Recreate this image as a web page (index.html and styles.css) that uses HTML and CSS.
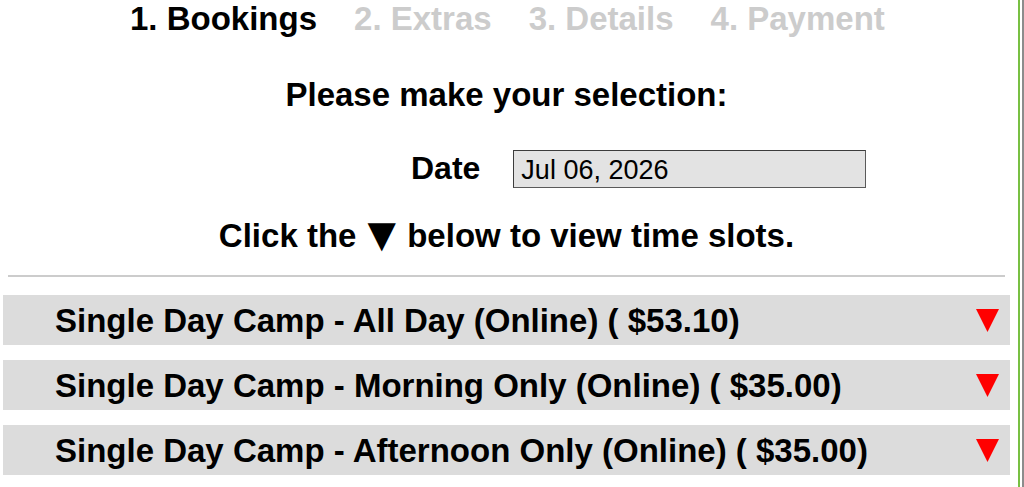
FILE: index.html
```html
<!DOCTYPE html>
<html lang="en">
<head>
<meta charset="utf-8">
<title>Bookings</title>
<link rel="stylesheet" href="styles.css">
</head>
<body>
<div class="outer">
  <div class="frame">
    <div class="content">
      <nav class="steps">
        <span class="step active">1. Bookings</span>
        <span class="step">2. Extras</span>
        <span class="step">3. Details</span>
        <span class="step">4. Payment</span>
      </nav>
      <h2 class="prompt">Please make your selection:</h2>
      <div class="date-row">
        <label class="date-label" for="date">Date</label>
        <input class="date-input" id="date" type="text" value="Jul 06, 2026" readonly>
      </div>
      <p class="hint">Click the <span class="tri">▼</span> below to view time slots.</p>
      <hr class="divider">
      <div class="rows">
        <div class="row"><span class="row-title">Single Day Camp - All Day (Online) ( $53.10)</span><svg class="arrow" viewBox="0 0 23 23"><polygon points="0,0 23,0 11.5,23" fill="#ff0000"/></svg></div>
        <div class="row"><span class="row-title">Single Day Camp - Morning Only (Online) ( $35.00)</span><svg class="arrow" viewBox="0 0 23 23"><polygon points="0,0 23,0 11.5,23" fill="#ff0000"/></svg></div>
        <div class="row"><span class="row-title">Single Day Camp - Afternoon Only (Online) ( $35.00)</span><svg class="arrow" viewBox="0 0 23 23"><polygon points="0,0 23,0 11.5,23" fill="#ff0000"/></svg></div>
      </div>
    </div>
  </div>
</div>
</body>
</html>
```

FILE: styles.css
```css
html, body {
  margin: 0;
  padding: 0;
  background: #ffffff;
}
body {
  font-family: "Liberation Sans", Arial, sans-serif;
  color: #000;
  overflow: hidden;
}
.outer {
  width: 1022px;
  height: 487px;
  border-right: 2px solid #8c8c8c;
}
.frame {
  width: 1020px;
  height: 487px;
  border-right: 2px solid #78c043;
  box-sizing: border-box;
}
.content {
  width: 1007px;
  margin-left: 3px;
}
.steps {
  display: flex;
  gap: 37px;
  padding-left: 127px;
  font-size: 33px;
  font-weight: bold;
  line-height: 37px;
  color: #cccccc;
}
.step.active {
  color: #000;
}
.prompt {
  margin: 39px 0 0;
  font-size: 33px;
  line-height: 38px;
  font-weight: bold;
  text-align: center;
}
.date-row {
  display: flex;
  align-items: flex-start;
  gap: 33px;
  margin-top: 36px;
  padding-left: 408px;
}
.date-label {
  font-size: 32px;
  font-weight: bold;
  line-height: 32px;
  padding-top: 2px;
}
.date-input {
  box-sizing: border-box;
  width: 353px;
  height: 38px;
  margin: 0;
  padding: 2px 0 0 7px;
  border: 1px solid #5a5a5a;
  border-top-color: #3c3c3c;
  border-left-color: #3c3c3c;
  background: #e3e3e3;
  font-family: "Liberation Sans", Arial, sans-serif;
  font-size: 27px;
  color: #000;
  outline: none;
}
.hint {
  margin: 29px 0 0;
  font-size: 33px;
  line-height: 38px;
  font-weight: bold;
  text-align: center;
}
.tri {
  font-family: "DejaVu Sans", sans-serif;
  font-size: 37px;
  line-height: 0;
  margin: 0 2px;
}
.divider {
  margin: 20px 5px 0;
  border: 0;
  border-top: 2px solid #cccccc;
  height: 0;
}
.rows {
  margin-top: 18px;
  display: flex;
  flex-direction: column;
  gap: 15px;
}
.row {
  display: flex;
  align-items: flex-start;
  justify-content: space-between;
  box-sizing: border-box;
  height: 50px;
  background: #dcdcdc;
  padding: 0 11px 0 52px;
}
.row-title {
  font-size: 33px;
  font-weight: bold;
  line-height: 47px;
  padding-top: 2px;
}
.arrow {
  width: 23px;
  height: 23px;
  margin-top: 14px;
}
```
